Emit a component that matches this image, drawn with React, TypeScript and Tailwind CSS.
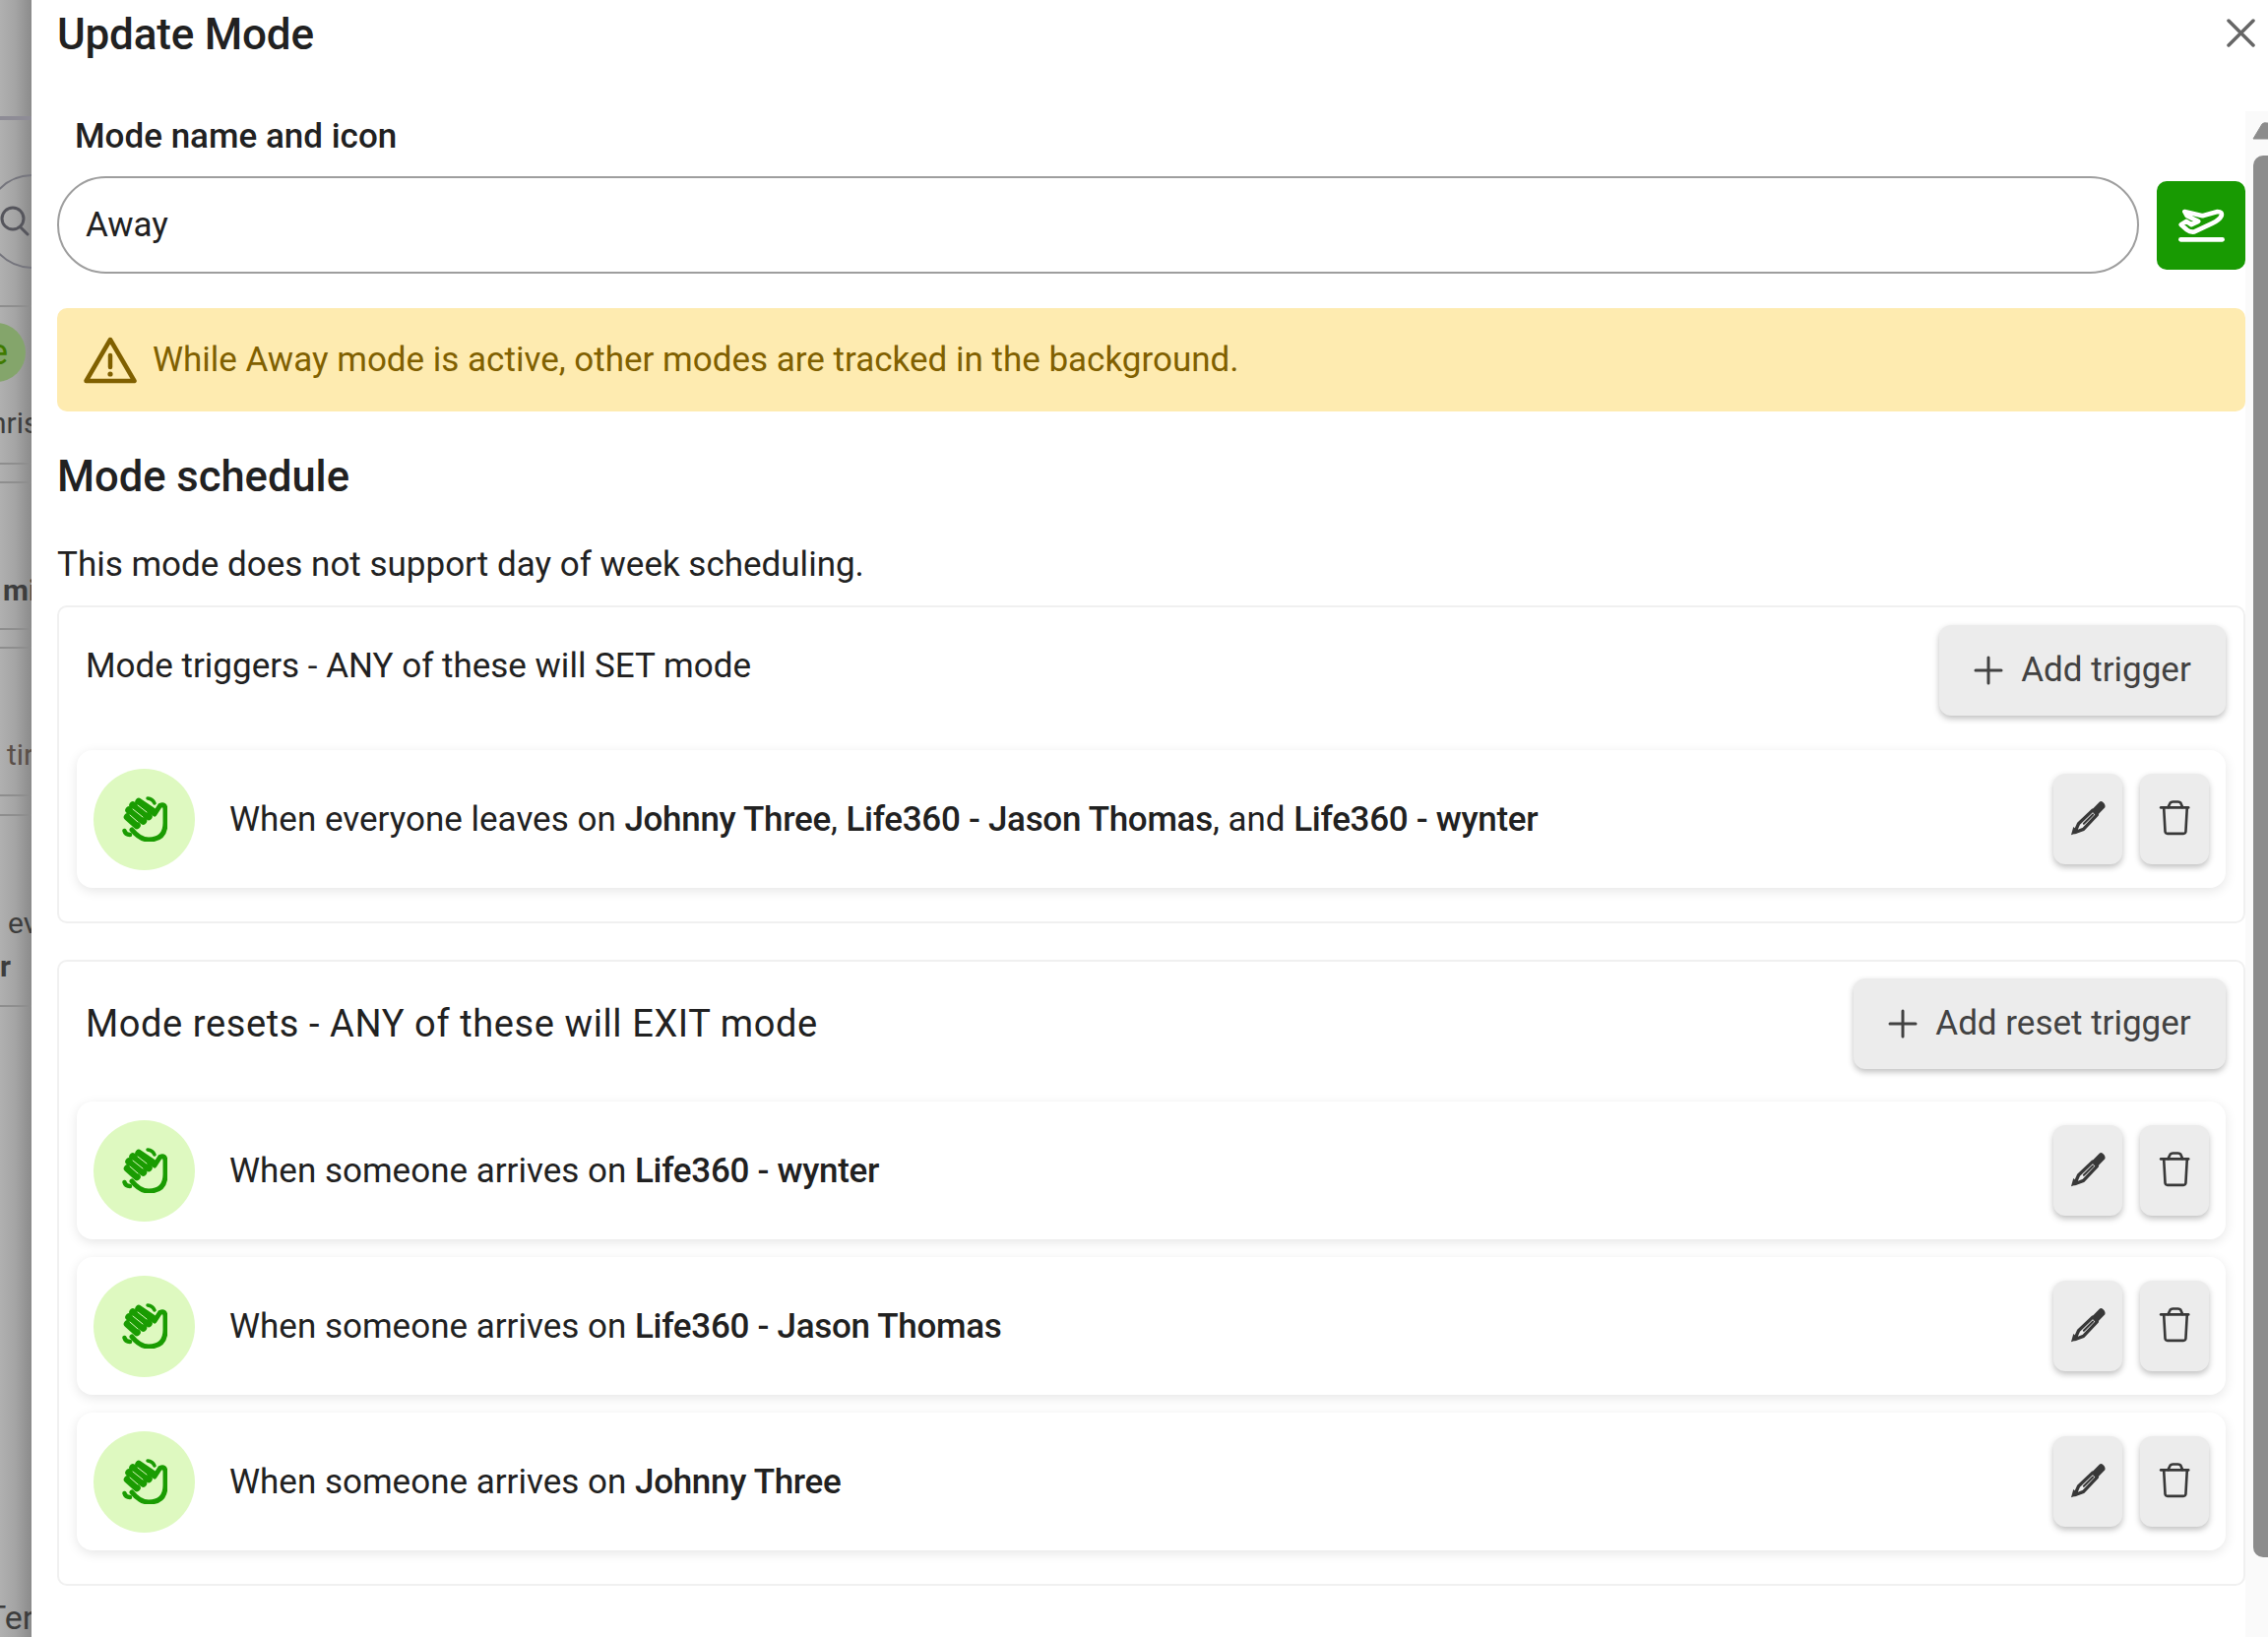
import { ReactNode } from "react";

function HandIcon() {
  return (
    <svg width="46" height="46" viewBox="0 0 46 46" fill="none" stroke="#1a9c02" strokeLinecap="round" strokeLinejoin="round">
      <path d="M33 18 L38.500 9.500 Q43.500 7 44 13 L44 27 Q44 44 27 44 Q18 44 10 34" strokeWidth="5" />
      <path d="M17 5.500 L31 15" strokeWidth="7.500" />
      <path d="M11 9 L27 20.500" strokeWidth="7.500" />
      <path d="M7 14 L21.500 25" strokeWidth="7.500" />
      <path d="M5.500 21 L15 29.500" strokeWidth="7.500" />
      <g stroke="#def9c0" strokeWidth="1">
        <path d="M16 9 L25 16" />
        <path d="M11 13 L21 21" />
        <path d="M8 19 L16 26" />
      </g>
      <path d="M26 2 Q31 2.500 33 7" strokeWidth="3.500" />
      <path d="M2.500 35 Q3.500 39 8 39" strokeWidth="4.500" />
    </svg>
  );
}

function PlaneIcon() {
  return (
    <svg width="47" height="35" viewBox="486 630 142 106" fill="none" stroke="#fff" strokeLinecap="round" strokeLinejoin="round">
      <path d="M505 642 L560 655 L606 642 Q622 642 618 655 Q612 668 590 678 L535 704 Q522 706 512 698 L494 682 L510 672 L526 682 L547 672 L512 655 Z" strokeWidth="14" />
      <path d="M493 728 L621 728" strokeWidth="14" />
    </svg>
  );
}

function PencilIcon() {
  return (
    <svg width="38" height="38" viewBox="455 575 115 115" fill="none" className="mb-[2px]">
      <path d="M528 604 L548 583 Q553 578 559 584 Q568 592 565 600 L541 625 Z" fill="#383838" />
      <path d="M528 608 L484 650 L472 677 L499 667 L541 622 Z" stroke="#383838" strokeWidth="10" strokeLinejoin="round" />
      <path d="M500 650 L528 622" stroke="#383838" strokeWidth="6" strokeLinecap="round" />
      <path d="M461 685 L468 660 L486 676 Z" fill="#383838" />
    </svg>
  );
}

function TrashIcon() {
  return (
    <svg width="32" height="37" viewBox="726 576 98 112" fill="none" stroke="#383838" strokeLinecap="round" strokeLinejoin="round" className="mr-[1px] mb-[3px]">
      <path d="M733 601 L818 601" strokeWidth="9" />
      <path d="M755 600 L762 586 Q764 583 770 583 L786 583 Q792 583 794 586 L800 600" strokeWidth="8" />
      <path d="M742 604 L746 676 Q747 682 753 682 L803 682 Q809 682 810 676 L814 604" strokeWidth="8" />
    </svg>
  );
}

function WarningIcon() {
  return (
    <svg width="54" height="48" viewBox="0 0 54 48" fill="none" className="shrink-0">
      <path d="M27 3 L51.500 45 L2.500 45 Z" stroke="#806000" strokeWidth="4.500" strokeLinejoin="round" />
      <path d="M27 19 L27 31" stroke="#806000" strokeWidth="4.500" strokeLinecap="round" />
      <circle cx="27" cy="38" r="2.600" fill="#806000" />
    </svg>
  );
}

function PlusIcon() {
  return (
    <svg width="30" height="30" viewBox="0 0 30 30" fill="none" stroke="#424242" strokeWidth="3" strokeLinecap="round" className="shrink-0">
      <path d="M15 2 L15 28 M2 15 L28 15" />
    </svg>
  );
}

function Strong({ children }: { children: ReactNode }) {
  return <span className="font-medium tracking-[-0.3px]">{children}</span>;
}

function RuleCard({ children }: { children: ReactNode }) {
  return (
    <div className="flex h-[140px] items-center rounded-[16px] bg-white px-[17px] shadow-[0_3px_12px_rgba(0,0,0,0.1)]">
      <div className="flex h-[103px] w-[103px] shrink-0 items-center justify-center rounded-full bg-[#def9c0]">
        <HandIcon />
      </div>
      <p className="ml-[35px] flex-1 pt-[3px] text-[35px] text-[#212121]">{children}</p>
      <div className="flex gap-[18px]">
        <button className="flex h-[92px] w-[70px] items-center justify-center rounded-[12px] bg-[#ececec] shadow-[0_3px_6px_rgba(0,0,0,0.25)]">
          <PencilIcon />
        </button>
        <button className="flex h-[92px] w-[70px] items-center justify-center rounded-[12px] bg-[#ececec] shadow-[0_3px_6px_rgba(0,0,0,0.25)]">
          <TrashIcon />
        </button>
      </div>
    </div>
  );
}

function AddButton({ label, width }: { label: string; width: string }) {
  return (
    <button className={`flex h-[92px] items-center justify-center gap-[18px] rounded-[12px] bg-[#ececec] text-[35px] text-[#424242] shadow-[0_3px_6px_rgba(0,0,0,0.25)] ${width}`}>
      <PlusIcon />
      {label}
    </button>
  );
}

function PageBehind() {
  return (
    <div className="flex h-full w-[32px] shrink-0 flex-col overflow-hidden bg-linear-to-r from-[#b0b0b0] via-[#a4a4a4] to-[#8b8b8b] text-[30px] text-[#3d3d3d]">
      <div className="mt-[118px] h-[4px] shrink-0 bg-[#8e8c96]" />
      <div className="mt-[55px] ml-[-15px] flex h-[96px] w-[200px] shrink-0 items-center rounded-full border-2 border-[#75757d] pl-[13px]">
        <svg width="30" height="32" viewBox="0 0 30 32" fill="none" stroke="#55555c" strokeWidth="3" strokeLinecap="round" className="shrink-0">
          <circle cx="13" cy="13" r="11" />
          <path d="M21 22 L28 29" />
        </svg>
      </div>
      <div className="mt-[37px] h-[2px] shrink-0 bg-[#8e8e8e]" />
      <div className="mt-[16px] ml-[-34px] flex h-[60px] w-[60px] shrink-0 items-center justify-end rounded-full bg-[#84a56b] pr-[18px] text-[36px] text-[#3f7a00]">e</div>
      <div className="mt-[18px] ml-[-10px] h-[48px] shrink-0 whitespace-nowrap leading-[48px]">hristi</div>
      <div className="mt-[16px] h-[2px] shrink-0 bg-[#8e8e8e]" />
      <div className="mt-[17px] h-[2px] shrink-0 bg-[#8e8e8e]" />
      <div className="mt-[87px] ml-[3px] h-[44px] shrink-0 whitespace-nowrap font-bold leading-[44px]">mi</div>
      <div className="mt-[16px] h-[2px] shrink-0 bg-[#8e8e8e]" />
      <div className="mt-[17px] h-[2px] shrink-0 bg-[#8e8e8e]" />
      <div className="mt-[86px] ml-[7px] h-[44px] shrink-0 whitespace-nowrap leading-[44px] text-[#5a4f48]">tir</div>
      <div className="mt-[18px] h-[2px] shrink-0 bg-[#8e8e8e]" />
      <div className="mt-[18px] h-[2px] shrink-0 bg-[#8e8e8e]" />
      <div className="mt-[87px] ml-[8px] h-[44px] shrink-0 whitespace-nowrap leading-[44px]">ev</div>
      <div className="ml-[-33px] h-[44px] shrink-0 whitespace-nowrap font-bold leading-[44px]">ner</div>
      <div className="mt-[17px] h-[2px] shrink-0 bg-[#8e8e8e]" />
      <div className="mt-[598px] ml-[-14px] h-[44px] shrink-0 whitespace-nowrap text-[34px] leading-[44px]">Tern</div>
    </div>
  );
}

export default function App() {
  return (
    <div className="flex h-[1663px] w-full overflow-hidden bg-white font-['Roboto',sans-serif] text-[#212121]">
      <PageBehind />
      <div className="flex min-w-0 flex-1 flex-col">
        <div className="flex h-[113px] shrink-0 items-start justify-between pl-[26px] pr-[13px]">
          <h1 className="mt-[7px] text-[44px] leading-[56px] font-medium tracking-[-0.2px]">Update Mode</h1>
          <svg width="29" height="29" viewBox="0 0 29 29" fill="none" stroke="#666" strokeWidth="3.500" strokeLinecap="round" className="mt-[19px]">
            <path d="M2 2 L27 27 M27 2 L2 27" />
          </svg>
        </div>
        <div className="flex min-h-0 flex-1">
          <div className="flex w-[2249px] shrink-0 flex-col pl-[26px]">
            <label className="mt-[6px] ml-[18px] h-[38px] text-[35px] leading-[40px] font-medium">Mode name and icon</label>
            <div className="mt-[22px] flex items-center gap-[18px]">
              <div className="flex h-[99px] flex-1 items-center rounded-full border-2 border-[#9e9e9e] pt-[2px] pl-[27px] text-[35px]">Away</div>
              <div className="flex h-[90px] w-[90px] items-center justify-center rounded-[10px] bg-[#189a02]">
                <PlaneIcon />
              </div>
            </div>
            <div className="mt-[35px] flex h-[105px] items-center gap-[16px] rounded-[10px] bg-[#feebb0] pl-[27px] text-[35px] text-[#806000]">
              <WarningIcon />
              <span className="pt-[2px]">While Away mode is active, other modes are tracked in the background.</span>
            </div>
            <h2 className="mt-[41px] text-[43.500px] leading-[52px] font-medium">Mode schedule</h2>
            <p className="mt-[41px] text-[35px] leading-[44px]">This mode does not support day of week scheduling.</p>

            <section className="mt-[19px] h-[323px] rounded-[10px] border-2 border-[#f0f0f0] px-[18px] pt-[18px]">
              <div className="flex items-start justify-between">
                <h3 className="mt-[20px] pl-[9px] text-[35px] leading-[44px]">Mode triggers - ANY of these will SET mode</h3>
                <AddButton label="Add trigger" width="w-[291px]" />
              </div>
              <div className="mt-[35px]">
                <RuleCard>
                  When everyone leaves on <Strong>Johnny Three</Strong>, <Strong>Life360 - Jason Thomas</Strong>, and <Strong>Life360 - wynter</Strong>
                </RuleCard>
              </div>
            </section>

            <section className="mt-[37px] h-[636px] rounded-[10px] border-2 border-[#f0f0f0] px-[18px] pt-[17px]">
              <div className="flex items-center justify-between">
                <h3 className="pl-[9px] text-[38px] leading-[44px] tracking-[0.6px]">Mode resets - ANY of these will EXIT mode</h3>
                <AddButton label="Add reset trigger" width="w-[378px]" />
              </div>
              <div className="mt-[33px] flex flex-col gap-[18px]">
                <RuleCard>
                  When someone arrives on <Strong>Life360 - wynter</Strong>
                </RuleCard>
                <RuleCard>
                  When someone arrives on <Strong>Life360 - Jason Thomas</Strong>
                </RuleCard>
                <RuleCard>
                  When someone arrives on <Strong>Johnny Three</Strong>
                </RuleCard>
              </div>
            </section>
          </div>
          <div className="flex flex-1 flex-col items-end bg-[#fafafa]">
            <svg width="16" height="18" viewBox="0 0 16 18" className="mt-[11px] shrink-0">
              <path d="M1 17 L10 2 Q12 0 15 1 L16 1 L16 17 Z" fill="#8c8c8c" stroke="#8c8c8c" strokeLinejoin="round" />
            </svg>
            <div className="mt-[16px] h-[1424px] w-[15px] rounded-l-[10px] bg-[#8c8c8c]" />
          </div>
        </div>
      </div>
    </div>
  );
}
